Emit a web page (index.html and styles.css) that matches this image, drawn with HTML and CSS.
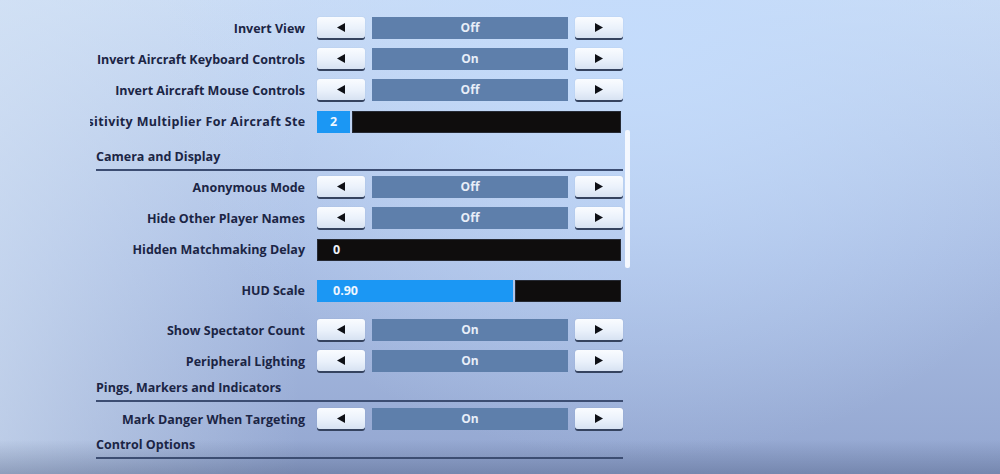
FILE: index.html
```html
<!DOCTYPE html>
<html lang="en">
<head>
<meta charset="utf-8">
<title>Settings</title>
<link rel="stylesheet" href="styles.css">
</head>
<body>
<div class="panel">
  <div class="row r-first">
    <div class="label">Invert View</div>
    <div class="select">
      <div class="btn"><svg width="8" height="9" viewBox="0 0 8 9"><polygon points="8,0 8,9 0,4.5"/></svg></div>
      <div class="value">Off</div>
      <div class="btn"><svg width="8" height="9" viewBox="0 0 8 9"><polygon points="0,0 0,9 8,4.5"/></svg></div>
    </div>
  </div>
  <div class="row">
    <div class="label">Invert Aircraft Keyboard Controls</div>
    <div class="select">
      <div class="btn"><svg width="8" height="9" viewBox="0 0 8 9"><polygon points="8,0 8,9 0,4.5"/></svg></div>
      <div class="value">On</div>
      <div class="btn"><svg width="8" height="9" viewBox="0 0 8 9"><polygon points="0,0 0,9 8,4.5"/></svg></div>
    </div>
  </div>
  <div class="row">
    <div class="label">Invert Aircraft Mouse Controls</div>
    <div class="select">
      <div class="btn"><svg width="8" height="9" viewBox="0 0 8 9"><polygon points="8,0 8,9 0,4.5"/></svg></div>
      <div class="value">Off</div>
      <div class="btn"><svg width="8" height="9" viewBox="0 0 8 9"><polygon points="0,0 0,9 8,4.5"/></svg></div>
    </div>
  </div>
  <div class="row">
    <div class="label clip"><span class="clip-text">Sensitivity Multiplier For Aircraft Steering</span></div>
    <div class="slider">
      <div class="fill small">2</div>
      <div class="track"></div>
    </div>
  </div>

  <div class="section s-camera">Camera and Display</div>

  <div class="row">
    <div class="label">Anonymous Mode</div>
    <div class="select">
      <div class="btn"><svg width="8" height="9" viewBox="0 0 8 9"><polygon points="8,0 8,9 0,4.5"/></svg></div>
      <div class="value">Off</div>
      <div class="btn"><svg width="8" height="9" viewBox="0 0 8 9"><polygon points="0,0 0,9 8,4.5"/></svg></div>
    </div>
  </div>
  <div class="row">
    <div class="label">Hide Other Player Names</div>
    <div class="select">
      <div class="btn"><svg width="8" height="9" viewBox="0 0 8 9"><polygon points="8,0 8,9 0,4.5"/></svg></div>
      <div class="value">Off</div>
      <div class="btn"><svg width="8" height="9" viewBox="0 0 8 9"><polygon points="0,0 0,9 8,4.5"/></svg></div>
    </div>
  </div>
  <div class="row">
    <div class="label">Hidden Matchmaking Delay</div>
    <div class="slider">
      <div class="track full">0</div>
    </div>
  </div>
  <div class="row r-hud">
    <div class="label">HUD Scale</div>
    <div class="slider">
      <div class="fill" style="width: 196px">0.90</div>
      <div class="track"></div>
    </div>
  </div>
  <div class="row">
    <div class="label">Show Spectator Count</div>
    <div class="select">
      <div class="btn"><svg width="8" height="9" viewBox="0 0 8 9"><polygon points="8,0 8,9 0,4.5"/></svg></div>
      <div class="value">On</div>
      <div class="btn"><svg width="8" height="9" viewBox="0 0 8 9"><polygon points="0,0 0,9 8,4.5"/></svg></div>
    </div>
  </div>
  <div class="row">
    <div class="label">Peripheral Lighting</div>
    <div class="select">
      <div class="btn"><svg width="8" height="9" viewBox="0 0 8 9"><polygon points="8,0 8,9 0,4.5"/></svg></div>
      <div class="value">On</div>
      <div class="btn"><svg width="8" height="9" viewBox="0 0 8 9"><polygon points="0,0 0,9 8,4.5"/></svg></div>
    </div>
  </div>

  <div class="section s-pings">Pings, Markers and Indicators</div>

  <div class="row">
    <div class="label">Mark Danger When Targeting</div>
    <div class="select">
      <div class="btn"><svg width="8" height="9" viewBox="0 0 8 9"><polygon points="8,0 8,9 0,4.5"/></svg></div>
      <div class="value">On</div>
      <div class="btn"><svg width="8" height="9" viewBox="0 0 8 9"><polygon points="0,0 0,9 8,4.5"/></svg></div>
    </div>
  </div>

  <div class="section s-control">Control Options</div>

  <div class="scrollbar"></div>
</div>
</body>
</html>
```

FILE: styles.css
```css
* { box-sizing: border-box; }

html, body {
  margin: 0;
  height: 100%;
}

body {
  width: 1000px;
  height: 474px;
  overflow: hidden;
  font-family: "Open Sans", "Noto Sans", "Liberation Sans", sans-serif;
  font-weight: 700;
  color: #1b2545;
  background:
    linear-gradient(to bottom, rgba(70, 85, 120, 0) 0, rgba(70, 85, 120, 0) 440px, rgba(70, 85, 120, 0.38) 474px),
    radial-gradient(ellipse 480px 420px at 640px 40px, rgba(196, 220, 252, 0.95) 0%, rgba(196, 220, 252, 0) 100%),
    linear-gradient(to right, rgba(214, 228, 245, 0.6) 0, rgba(214, 228, 245, 0) 300px),
    linear-gradient(to bottom, #c9dbf4 0%, #a9bde3 55%, #93a6d0 100%);
}

.panel {
  position: relative;
  margin-left: 96px;
  width: 527px;
  padding-top: 13px;
  display: flex;
  flex-direction: column;
}

.row {
  display: flex;
  align-items: center;
  gap: 12px;
  height: 31px;
}

.r-hud {
  margin-top: 10px;
  margin-bottom: 9px;
}

.label {
  width: 209px;
  flex-shrink: 0;
  text-align: right;
  font-size: 12.5px;
  white-space: nowrap;
}

.label.clip {
  width: 215px;
  margin-left: -6px;
  overflow: hidden;
  text-align: left;
  display: flex;
}

.clip-text {
  flex-shrink: 0;
  margin-left: -26px;
  letter-spacing: 0.35px;
}

.select {
  display: flex;
  gap: 7px;
  width: 306px;
  align-items: flex-start;
  height: 24px;
}

.btn {
  width: 48px;
  height: 21px;
  border-radius: 3px;
  background: linear-gradient(to bottom, #fafcff 0%, #eaf1fb 55%, #d7e2f2 100%);
  box-shadow: 0 2px 0 #35435f, 0 0 1px rgba(60, 80, 120, 0.3);
  display: flex;
  align-items: center;
  justify-content: center;
  flex-shrink: 0;
}

.btn svg {
  display: block;
  fill: #0e1016;
}

.value {
  flex: 1;
  height: 22px;
  background: #5e7fab;
  color: #e8eef8;
  font-size: 12px;
  display: flex;
  align-items: center;
  justify-content: center;
}

.slider {
  display: flex;
  gap: 2px;
  width: 304px;
  height: 22px;
}

.fill {
  background: #1b97f4;
  color: #eef6ff;
  font-size: 12.5px;
  display: flex;
  align-items: center;
  padding-left: 16px;
  flex-shrink: 0;
}

.fill.small {
  width: 33px;
  padding-left: 0;
  justify-content: center;
}

.track {
  flex: 1;
  background: #0f0d0d;
  box-shadow: inset 0 0 0 1px rgba(60, 70, 90, 0.5);
}

.track.full {
  color: #eef2f8;
  font-size: 12.5px;
  display: flex;
  align-items: center;
  padding-left: 16px;
}

.section {
  font-size: 12.5px;
  line-height: 20px;
  padding-bottom: 2px;
  border-bottom: 2px solid #3c4d72;
  width: 527px;
}

.s-camera {
  padding-top: 10px;
  margin-bottom: 1px;
}

.s-pings {
  padding-top: 1px;
  margin-bottom: 2px;
}

.s-control {
  padding-top: 0;
}

.scrollbar {
  position: absolute;
  left: 529px;
  top: 130px;
  width: 5px;
  height: 138px;
  background: #f4f8ff;
  border-radius: 2px;
}
```
